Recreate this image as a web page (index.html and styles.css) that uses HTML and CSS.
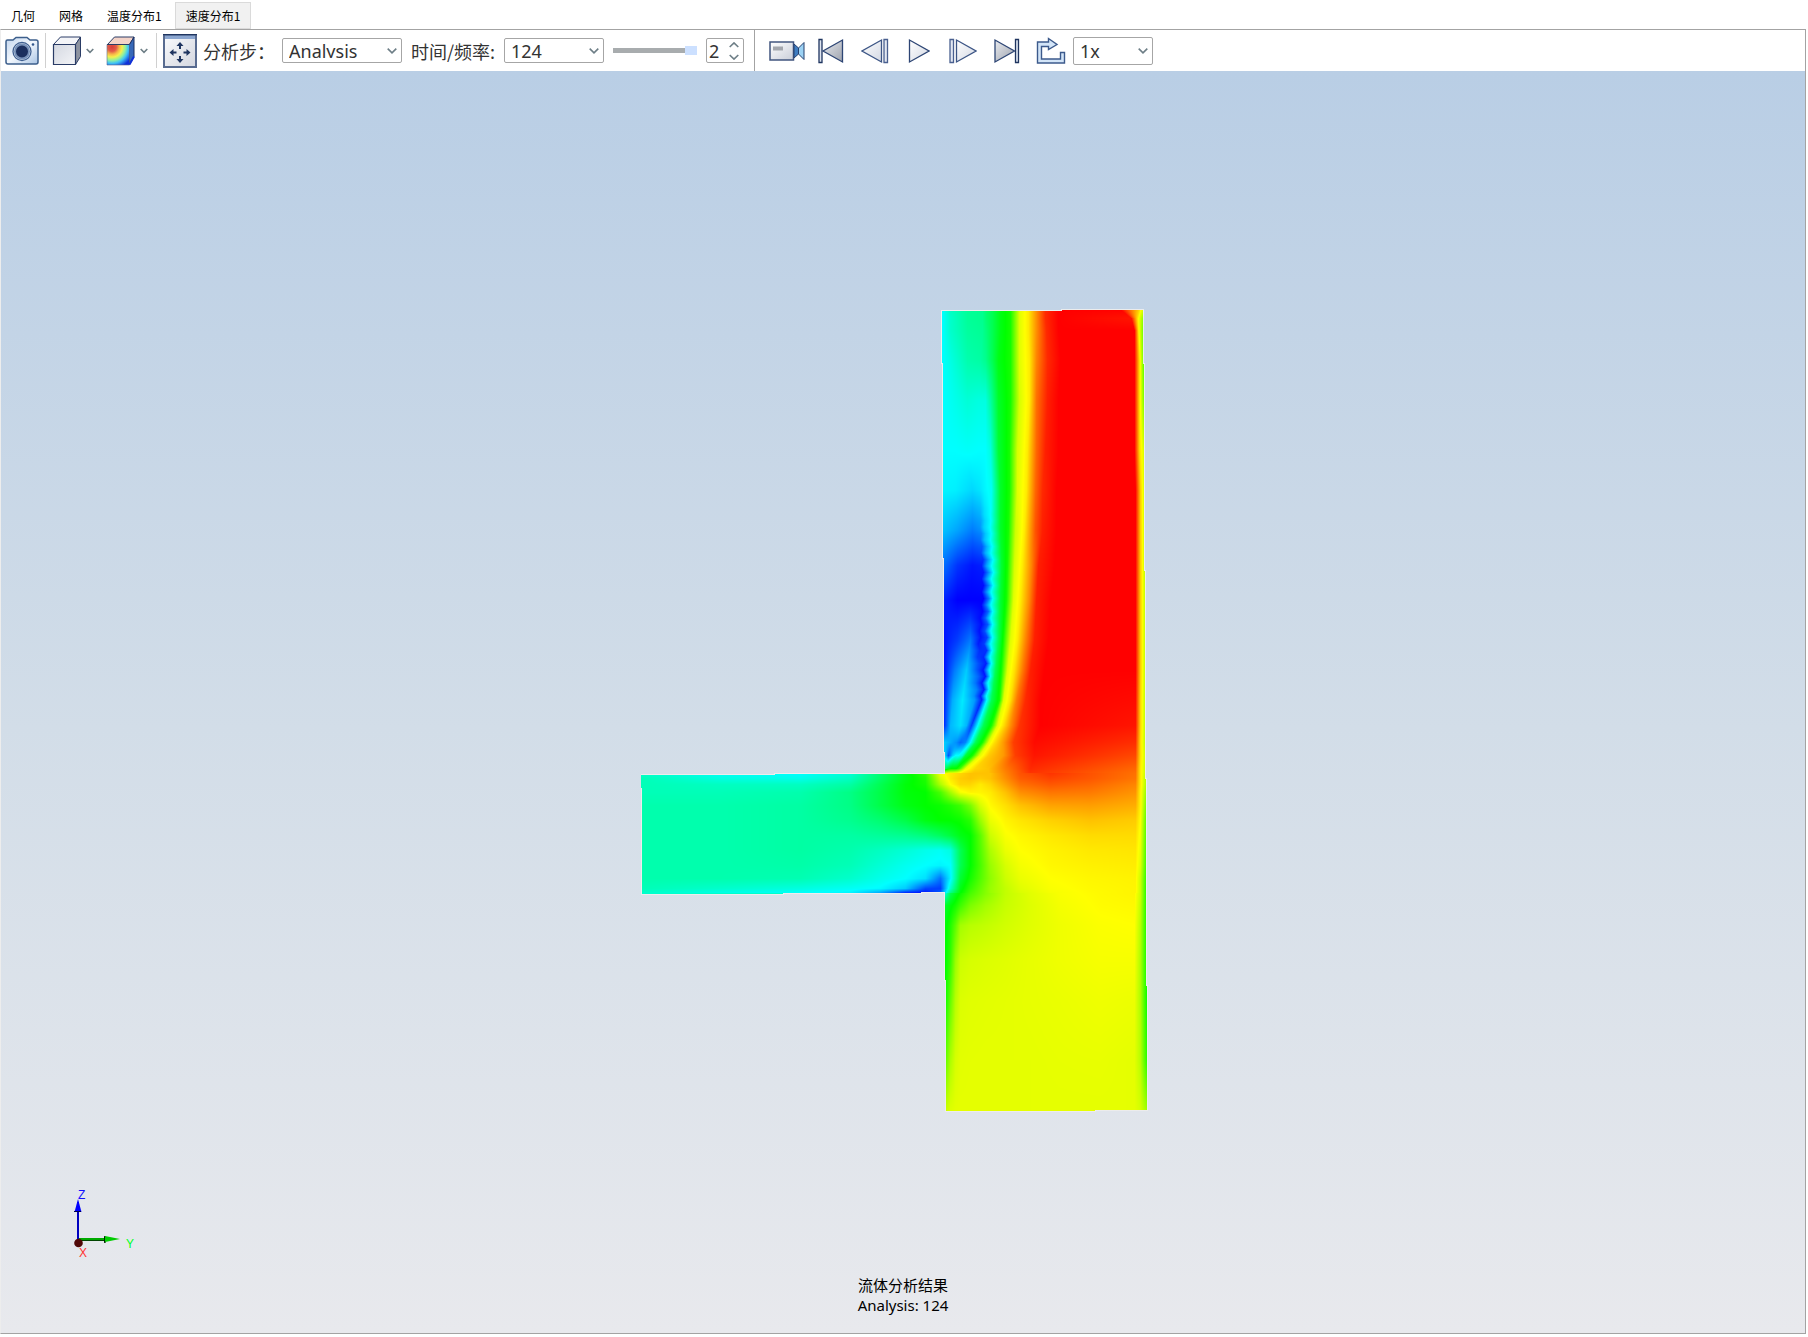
FILE: index.html
```html
<!DOCTYPE html>
<html lang="zh-CN">
<head>
<meta charset="utf-8">
<title>速度分布1</title>
<link rel="stylesheet" href="styles.css">
</head>
<body>
<nav class="tabs">
  <button class="tab" type="button">几何</button>
  <button class="tab" type="button">网格</button>
  <button class="tab" type="button">温度分布1</button>
  <button class="tab tab-active" type="button">速度分布1</button>
</nav>
<main class="panel">
  <div class="toolbar">
    <button class="tool tool-camera" type="button" aria-label="截图">
      <svg width="35" height="30" viewBox="0 0 35 30">
        <defs><linearGradient id="cam" x1="0" y1="0" x2="1" y2="1"><stop offset="0" stop-color="#c2d5ee"/><stop offset=".5" stop-color="#f2f7fd"/><stop offset="1" stop-color="#a9c4e4"/></linearGradient></defs>
        <path d="M2 5.500Q2 4 3.500 4H9L12 1.500H23L26 4H32Q34 4 34 6V26Q34 28 32 28H4Q2 28 2 26Z" fill="url(#cam)" stroke="#3d5f8c" stroke-width="1.500"/>
        <circle cx="18" cy="15.500" r="9" fill="#e8f0fa" stroke="#3f5f90" stroke-width="1.300"/>
        <circle cx="18" cy="15.500" r="7" fill="#1b2f5e" stroke="#7690b8" stroke-width="2"/>
        <circle cx="29" cy="8.500" r="1.300" fill="#31568c"/>
      </svg>
    </button>
    <span class="rule"></span>
    <button class="tool tool-menu" type="button" aria-label="显示模式">
      <svg width="30" height="30" viewBox="0 0 30 30">
        <defs><linearGradient id="gr" x1="0" y1="0" x2="1" y2="1"><stop offset="0" stop-color="#d4d8e1"/><stop offset="1" stop-color="#f3f4f7"/></linearGradient></defs>
        <path d="M1.500 8.500L8.500 1H28.500L23.500 8.500Z" fill="#f4f5f8" stroke="#2a3c66"/>
        <path d="M23.500 8.500L28.500 1V20.500L23.500 28.500Z" fill="#8d93a0" stroke="#2a3c66"/>
        <path d="M1.500 8.500H23.500V28.500H1.500Z" fill="url(#gr)" stroke="#2a3c66" stroke-width="1.200"/>
      </svg>
      <svg class="chevron" width="8" height="6" viewBox="0 0 8 6"><path d="M.7 1L4 4.300L7.300 1"/></svg>
    </button>
    <button class="tool tool-menu" type="button" aria-label="云图">
      <svg width="32" height="30" viewBox="0 0 32 30">
        <defs><radialGradient id="rb" gradientUnits="userSpaceOnUse" cx="8" cy="11" r="24"><stop offset="0" stop-color="#d83c3c"/><stop offset=".18" stop-color="#e25a48"/><stop offset=".3" stop-color="#f6b44a"/><stop offset=".42" stop-color="#f5f04c"/><stop offset=".56" stop-color="#8ff0a0"/><stop offset=".68" stop-color="#40c4f6"/><stop offset=".9" stop-color="#1030d8"/></radialGradient></defs>
        <path d="M3.500 8.500L10.500 1H30L25.500 8.500Z" fill="#f3d3c8" stroke="#2a3c66"/>
        <path d="M25.500 8.500L30 1V20.500L25.500 28.500Z" fill="#3768b8" stroke="#1d3163"/>
        <path d="M3 8.500H25.500V29H3Z" fill="url(#rb)" stroke="#5a6a90" stroke-width=".6"/><path d="M3 8.500H25.500" stroke="#2a3c66"/>
        <path d="M25.500 28.500L30 20.500" stroke="#1030d8" stroke-width="2"/>
      </svg>
      <svg class="chevron" width="8" height="6" viewBox="0 0 8 6"><path d="M.7 1L4 4.300L7.300 1"/></svg>
    </button>
    <span class="rule"></span>
    <button class="tool tool-fit" type="button" aria-label="适应窗口">
      <svg width="34" height="34" viewBox="0 0 34 34">
        <defs><linearGradient id="ft" x1="0" y1="0" x2="1" y2="1"><stop offset="0" stop-color="#fbfcfe"/><stop offset="1" stop-color="#d3d6df"/></linearGradient></defs>
        <path d="M1 1H33V33H1Z" fill="url(#ft)" stroke="#586b90" stroke-width="2"/>
        <path d="M2 1.500H32V5H2Z" fill="#8ba6d0"/><path d="M0 .5H34" stroke="#1f3560" stroke-width="1.500"/>
        <g fill="#1f3560"><path d="M17 8L20.500 12H18V15H16V12H13.500Z"/><path d="M17 29L20.500 25H18V22H16V25H13.500Z"/><path d="M6.500 18.500L10.500 15V17.500H13.500V19.500H10.500V22Z"/><path d="M27.500 18.500L23.500 15V17.500H20.500V19.500H23.500V22Z"/></g>
      </svg>
    </button>
    <label class="label label-step" for="step">分析步：</label>
    <span class="combo combo-step">
      <select id="step" class="select"><option>Analysis</option></select>
      <svg class="chevron" width="10" height="6" viewBox="0 0 10 6"><path d="M.7 .7L5 4.800L9.300 .7"/></svg>
    </span>
    <label class="label label-time" for="time">时间/频率:</label>
    <span class="combo combo-time">
      <select id="time" class="select"><option>124</option></select>
      <svg class="chevron" width="10" height="6" viewBox="0 0 10 6"><path d="M.7 .7L5 4.800L9.300 .7"/></svg>
    </span>
    <input class="slider" type="range" min="1" max="2" value="2" aria-label="帧">
    <span class="spin">
      <input class="spin-value" type="number" value="2" aria-label="帧号">
      <svg class="chevron" width="10" height="18" viewBox="0 0 10 18"><path d="M.7 5L5 .900L9.300 5M.7 13L5 17.100L9.300 13"/></svg>
    </span>
    <div class="player">
      <button class="tool tool-play" type="button" aria-label="录制">
        <svg width="36" height="22" viewBox="0 0 36 22">
          <defs><linearGradient id="vd" x1="0" y1="0" x2="1" y2="1"><stop offset="0" stop-color="#fff"/><stop offset="1" stop-color="#c9cdd8"/></linearGradient></defs>
          <path d="M1 2H24.500V20H1Z" fill="url(#vd)" stroke="#42557f" stroke-width="1.500"/>
          <path d="M4 6.500H14V10.500H4Z" fill="#a3a6ad"/>
          <path d="M25 4L29.500 8V14L25 18Z" fill="#3f7cc0" stroke="#27406f"/>
          <path d="M35 2.500V19.500L29.500 14V8Z" fill="#9cd2f4" stroke="#27406f"/>
        </svg>
      </button>
      <button class="tool tool-play" type="button" aria-label="第一帧">
        <svg width="26" height="26" viewBox="0 0 26 26"><defs><linearGradient id="dk" x1="0" y1="0" x2="1" y2="1"><stop offset="0" stop-color="#e9ebef"/><stop offset="1" stop-color="#9da2ad"/></linearGradient></defs>
          <path d="M1 1.500H4V24.500H1Z" fill="#dfe5f0" stroke="#1f3560" stroke-width="1.300"/><path d="M24.500 2V24L5 13Z" fill="url(#dk)" stroke="#2d4574" stroke-width="1.300"/></svg>
      </button>
      <button class="tool tool-play" type="button" aria-label="上一帧">
        <svg width="28" height="26" viewBox="0 0 28 26"><defs><linearGradient id="lt" x1="0" y1="0" x2="1" y2="1"><stop offset="0" stop-color="#fff"/><stop offset="1" stop-color="#d3d8e3"/></linearGradient></defs>
          <path d="M20.500 2V24L1 13Z" fill="url(#lt)" stroke="#3c5585" stroke-width="1.300"/><path d="M23 1.500H26.500V24.500H23Z" fill="#e3e8f2" stroke="#4a6090" stroke-width="1.300"/></svg>
      </button>
      <button class="tool tool-play" type="button" aria-label="播放">
        <svg width="22" height="26" viewBox="0 0 22 26"><path d="M1.500 2V24L21 13Z" fill="url(#lt)" stroke="#2d4574" stroke-width="1.300"/></svg>
      </button>
      <button class="tool tool-play" type="button" aria-label="下一帧">
        <svg width="28" height="26" viewBox="0 0 28 26"><path d="M1 1.500H4.500V24.500H1Z" fill="#e3e8f2" stroke="#4a6090" stroke-width="1.300"/><path d="M7.500 2V24L27 13Z" fill="url(#lt)" stroke="#3c5585" stroke-width="1.300"/></svg>
      </button>
      <button class="tool tool-play" type="button" aria-label="最后一帧">
        <svg width="26" height="26" viewBox="0 0 26 26"><path d="M1 2V24L20.500 13Z" fill="url(#dk)" stroke="#2d4574" stroke-width="1.300"/><path d="M21.500 1.500H24.500V24.500H21.500Z" fill="#dfe5f0" stroke="#1f3560" stroke-width="1.300"/></svg>
      </button>
      <button class="tool tool-play" type="button" aria-label="循环">
        <svg width="30" height="28" viewBox="0 0 30 28"><path d="M1.500 5H12.500V1.500L21 7.500L12.500 12.500V9.500H5.500V22H24.500V15.500H28.500V26H1.500Z" fill="#d3e5f8" stroke="#3c5a8c" stroke-width="1.400"/></svg>
      </button>
      <span class="combo combo-speed">
        <select class="select" aria-label="速度"><option>1x</option></select>
        <svg class="chevron" width="10" height="6" viewBox="0 0 10 6"><path d="M.7 .7L5 4.800L9.300 .7"/></svg>
      </span>
    </div>
  </div>
  <section class="viewport">
    <canvas id="field" class="field" width="524" height="804"></canvas>
    <svg class="triad" width="80" height="80" viewBox="0 0 80 80">
      <path d="M10 54.500H37" stroke="#004400" stroke-width="1"/><path d="M10 53H40" stroke="#0a0" stroke-width="2"/>
      <path d="M36 50V57L38 56.500V50.500Z" fill="#020"/><path d="M37 50L52 53L37 56Z" fill="#0c0"/>
      <path d="M10 16V54" stroke="#0000c0" stroke-width="2"/><path d="M10 13L13.500 26H6.500Z" fill="#00f"/><path d="M6 25.500H13" stroke="#000050"/>
      <circle cx="10.500" cy="57" r="4.300" fill="#500808"/>
      <text class="axis axis-z" x="10" y="13">Z</text>
      <text class="axis axis-y" x="58" y="62">Y</text>
      <text class="axis axis-x" x="11" y="71">X</text>
    </svg>
    <p class="caption">流体分析结果<br>Analysis: 124</p>
  </section>
</main>
<script src="script.js"></script>
</body>
</html>
```
FILE: styles.css
```css
* { box-sizing: border-box; }

body {
  margin: 0;
  height: 100vh;
  padding: 0 2px 3px 0;
  display: flex;
  flex-direction: column;
  background: #fff;
  color: #333;
  font-family: "Noto Sans", "Noto Sans CJK SC", sans-serif;
}

button, select, input { font: inherit; color: inherit; }

.tabs {
  display: flex;
  gap: 2px;
  height: 29px;
  padding-top: 2px;
}

.tab {
  height: 27px;
  padding: 0 10px;
  border: 1px solid transparent;
  background: none;
  color: #000;
  font-family: "Noto Sans CJK SC", sans-serif;
  font-size: 12px;
  line-height: 24px;
  white-space: nowrap;
}

.tab-active {
  border-color: #dadada;
  background: #f1f1f1;
}

.panel {
  flex: 1;
  display: flex;
  flex-direction: column;
  border: 1px solid #a3a3a3;
  border-left-color: #ededed;
}

.toolbar {
  display: flex;
  align-items: center;
  gap: 6px;
  height: 41px;
  padding-left: 3px;
  background: #fff;
}

.rule {
  width: 1px;
  height: 35px;
  background: #d0d0d0;
}

.tool {
  display: flex;
  align-items: center;
  flex-shrink: 0;
  padding: 0;
  border: 0;
  background: none;
}

.tool-camera { width: 35px; }
.tool-menu { width: 46px; gap: 4px; }
.tool-fit { width: 34px; }
.tool-play { width: 44px; justify-content: center; }

.chevron {
  fill: none;
  stroke: #6d7e86;
  stroke-width: 1.6;
}

.label {
  font-family: "Noto Sans CJK SC", sans-serif;
  font-size: 18px;
  line-height: 28px;
  white-space: nowrap;
}

.label-step { width: 73px; }
.label-time { width: 90px; text-align: center; }

.combo {
  display: grid;
  align-items: center;
  height: 25px;
  border: 1px solid #a6a6a6;
  border-radius: 2px;
  background: #fff;
}

.combo > * { grid-area: 1 / 1; }

.combo .chevron {
  justify-self: end;
  margin-right: 4px;
  pointer-events: none;
}

.combo-step { width: 120px; }
.combo-time { width: 100px; }
.combo-speed { width: 80px; height: 28px; }

.select {
  appearance: none;
  width: 100%;
  height: 23px;
  padding: 0 6px;
  border: 0;
  outline: 0;
  background: none;
  font-size: 18px;
}

.combo-step .select { clip-path: inset(0 0 4px); }

.slider {
  appearance: none;
  width: 90px;
  height: 9px;
  margin: 0;
  padding: 0 3px;
  background: none;
}

.slider::-webkit-slider-runnable-track {
  height: 9px;
  background: linear-gradient(#a8acae, #a8acae) center / 100% 5px no-repeat;
}

.slider::-webkit-slider-thumb {
  appearance: none;
  width: 12px;
  height: 9px;
  background: #cce0ff;
}

.spin {
  display: flex;
  align-items: center;
  width: 38px;
  height: 25px;
  padding: 0 4px 0 2px;
  border: 1px solid #a6a6a6;
  border-radius: 2px;
}

.spin-value {
  appearance: textfield;
  flex: 1;
  min-width: 0;
  height: 23px;
  padding: 0;
  border: 0;
  background: none;
  font-size: 18px;
}

.spin-value::-webkit-inner-spin-button { display: none; }

.player {
  display: flex;
  align-items: center;
  align-self: stretch;
  margin-left: 4px;
  padding-left: 10px;
  border-left: 1px solid #a3a3a3;
}

.viewport {
  position: relative;
  flex: 1;
  display: flex;
  align-items: center;
  justify-content: center;
  padding-top: 18px;
  background: linear-gradient(#b9cee5, #d2dde8 52%, #e8e9ed);
}

.field { display: block; }

.triad {
  position: absolute;
  left: 67px;
  bottom: 67px;
}

.axis { font-family: "Liberation Sans", sans-serif; font-size: 12px; }
.axis-x { fill: #f33; }
.axis-y { fill: #0f2; }
.axis-z { fill: #11f; }

.caption {
  position: absolute;
  left: 0;
  right: 0;
  bottom: 18px;
  margin: 0;
  color: #000;
  font-size: 15px;
  line-height: 20px;
  text-align: center;
}
```
FILE: script.js
```js
// Velocity magnitude over the tee junction. Values run 0 (blue) to 1 (red).
const ORIGIN_X = 641;
const ORIGIN_Y = 309;

// Each row: y, then knot positions and values. Knots of neighbouring rows correspond.
function row(y, xs, vs) { return { y, xs, vs }; }

const upper = [
  row(309, [942,950,967,982,986,992,1000,1010,1019,1028,1036,1045,1058,1120,1138,1144], [.25,.31,.35,.36,.39,.42,.48,.52,.72,.77,.86,.96,1,1,.8,.68]),
  row(318, [942,950,967,982,986,992,1000,1010,1019,1028,1036,1045,1058,1131,1137,1144], [.25,.3,.35,.36,.39,.42,.48,.52,.72,.77,.86,.96,1,.98,.78,.6]),
  row(330, [942,950,967,982,986,992,1000,1010,1019,1028,1036,1046,1058,1134,1138,1144], [.25,.3,.345,.355,.38,.42,.48,.52,.72,.77,.86,.96,1,1,.77,.56]),
  row(360, [942,951,967,980,985,992,998,1010,1019,1029,1036,1047,1060,1134,1139,1144], [.25,.28,.33,.34,.36,.42,.48,.52,.72,.77,.87,.96,1,1,.78,.56]),
  row(400, [943,955,967,978,985,990,998,1010,1019,1029,1036,1047,1058,1134,1139,1144], [.25,.27,.29,.28,.28,.34,.46,.52,.71,.77,.89,.97,1,1,.78,.6]),
  row(450, [943,955,967,978,985,990,998,1009,1017,1027,1036,1045,1058,1134,1139,1144], [.25,.25,.255,.25,.25,.28,.45,.52,.71,.77,.9,.97,1,1,.79,.7]),
  row(490, [943,955,972,980,984,991,1000,1009,1017,1026,1035,1042,1056,1135,1140,1144], [.24,.235,.21,.225,.24,.26,.46,.52,.72,.77,.9,.96,1,1,.8,.7]),
  row(530, [943,957,972,980,984,990,1000,1008,1015,1024,1035,1042,1056,1135,1140,1144], [.19,.16,.12,.14,.2,.25,.46,.52,.7,.77,.92,.97,1,1,.8,.7]),
  row(565, [943,957,972,982,987,992,1001,1007,1014,1022,1031,1038,1054,1135,1140,1144], [.11,.05,.02,.03,.15,.25,.45,.52,.71,.77,.87,.97,1,1,.8,.7]),
  row(600, [944,957,970,982,987,991,1000,1006,1013,1020,1029,1036,1050,1135,1140,1145], [.03,0,0,0,.12,.24,.45,.52,.72,.77,.87,.97,1,1,.8,.68]),
  row(640, [944,957,970,979,985,990,998,1003,1010,1017,1025,1034,1048,1135,1140,1145], [.02,.06,.12,.02,.06,.22,.42,.52,.72,.77,.87,.97,1,1,.8,.68]),
  row(670, [944,954,966,977,984,989,995,1001,1007,1014,1022,1030,1044,1135,1140,1145], [.02,.12,.2,.09,.02,.22,.42,.52,.72,.78,.88,.97,1,1,.8,.68]),
  row(700, [944,952,962,974,981,986,991,999,1003,1010,1016,1025,1040,1135,1140,1145], [.04,.17,.23,.15,.03,.24,.42,.52,.72,.78,.88,.96,1,.99,.79,.68]),
  row(725, [944,950,960,966,971,977,983,991,997,1003,1010,1019,1040,1135,1140,1145], [.05,.18,.22,.18,.06,.24,.42,.52,.72,.78,.86,.95,1,.98,.79,.68]),
  row(742, [944,950,956,960,965,970,975,982,988,994,1003,1013,1034,1135,1140,1145], [.2,.17,.14,.1,.13,.25,.42,.52,.72,.78,.85,.94,.99,.955,.78,.68]),
  row(755, [945,948,952,955,958,962,965,972,979,988,1003,1015,1034,1135,1140,1146], [.2,.08,.2,.25,.25,.3,.44,.52,.72,.8,.85,.94,.98,.93,.78,.68]),
  row(768, [945,947,949,951,952,954,956,959,965,975,988,1005,1030,1135,1140,1146], [.4,.45,.48,.5,.5,.5,.5,.55,.73,.79,.81,.88,.96,.9,.77,.68]),
  row(773, [941,943,945,947,949,951,953,956,962,973,988,1005,1030,1135,1140,1146], [.7,.72,.73,.74,.75,.75,.76,.76,.78,.81,.81,.87,.95,.89,.77,.68])
];

const MX = [642,720,800,850,880,905,925,940,950,960,970,980,990,1005,1020,1050,1090,1135,1140,1147];
const middle = [
  [773, .3,.26,.25,.29,.39,.48,.55,.74,.77,.79,.81,.81,.81,.87,.92,.95,.92,.89,.77,.66],
  [778, .32,.28,.27,.31,.4,.48,.53,.71,.77,.8,.81,.8,.81,.86,.91,.935,.915,.885,.77,.65],
  [784, .32,.31,.31,.34,.42,.49,.52,.67,.75,.79,.79,.77,.79,.84,.89,.915,.9,.87,.77,.64],
  [792, .32,.32,.33,.37,.43,.49,.5,.57,.66,.74,.76,.76,.77,.81,.86,.885,.88,.855,.76,.62],
  [805, .33,.33,.34,.37,.43,.48,.5,.51,.53,.56,.62,.71,.755,.78,.81,.84,.845,.83,.76,.58],
  [820, .33,.33,.34,.36,.39,.43,.48,.5,.5,.51,.54,.65,.73,.76,.775,.795,.81,.8,.75,.55],
  [835, .33,.33,.34,.34,.35,.36,.38,.41,.44,.48,.5,.59,.7,.745,.758,.772,.785,.785,.74,.54],
  [850, .33,.33,.34,.33,.31,.29,.27,.26,.28,.42,.5,.58,.67,.73,.75,.762,.772,.775,.73,.53],
  [865, .33,.33,.335,.32,.29,.265,.25,.24,.25,.42,.5,.57,.65,.71,.74,.757,.764,.768,.72,.52],
  [878, .33,.33,.325,.3,.27,.25,.22,.11,.24,.45,.52,.58,.64,.7,.73,.75,.758,.762,.7,.51],
  [888, .32,.3,.28,.26,.245,.2,.07,.06,.3,.48,.55,.6,.65,.69,.72,.745,.755,.76,.7,.5],
  [893, .3,.27,.25,.235,.15,.01,.01,.1,.38,.5,.57,.61,.65,.69,.712,.74,.753,.76,.7,.5]
].map(([y, ...vs]) => row(y, MX, vs));

const LX = [945,950,955,960,970,985,1005,1030,1060,1100,1134,1140,1147];
const lower = [
  [893, .3,.42,.47,.51,.57,.63,.69,.722,.745,.755,.76,.7,.5],
  [905, .46,.49,.52,.56,.62,.66,.695,.718,.74,.753,.756,.69,.5],
  [925, .49,.53,.59,.66,.68,.69,.705,.72,.735,.747,.75,.68,.5],
  [960, .5,.55,.65,.7,.71,.715,.72,.727,.735,.742,.742,.67,.5],
  [1000, .51,.6,.68,.715,.72,.722,.724,.727,.73,.735,.732,.67,.5],
  [1060, .59,.67,.71,.722,.724,.725,.725,.725,.727,.728,.724,.68,.53],
  [1113, .7,.72,.724,.725,.725,.725,.725,.725,.725,.725,.725,.71,.66]
].map(([y, ...vs]) => row(y, LX, vs));

// Outline of the part, stepping with the slightly rotated mesh edges.
const outline = [
  [942,311],[1062,311],[1062,310],[1143,310],[1143,364],[1144,364],[1144,571],[1145,571],[1145,779],
  [1146,779],[1146,986],[1147,986],[1147,1110],[1095,1110],[1095,1111],[946,1111],[946,980],[945,980],[945,892],
  [921,892],[921,893],[783,893],[783,894],[642,894],[642,788],[641,788],[641,775],[775,775],[775,774],
  [945,774],[945,752],[944,752],[944,558],[943,558],[943,363],[942,363]
];

function colour(v) {
  const t = Math.max(0, Math.min(1, v)) * 4;
  if (t < 1) return [0, 255 * t, 255];
  if (t < 2) return [0, 255, 255 * (2 - t)];
  if (t < 3) return [255 * (t - 2), 255, 0];
  return [255, 255 * (4 - t), 0];
}

function sampleRow(rows, y) {
  let i = 0;
  while (i < rows.length - 2 && rows[i + 1].y <= y) i++;
  const a = rows[i], b = rows[i + 1];
  const t = Math.max(0, Math.min(1, (y - a.y) / (b.y - a.y)));
  const mix = (p, q) => p.map((n, k) => n + (q[k] - n) * t);
  return { xs: mix(a.xs, b.xs), vs: mix(a.vs, b.vs) };
}

const canvas = document.getElementById("field");
const ctx = canvas.getContext("2d");
const layer = document.createElement("canvas");
layer.width = canvas.width;
layer.height = canvas.height;
const layerCtx = layer.getContext("2d");
const image = layerCtx.createImageData(layer.width, layer.height);

for (let py = 0; py < layer.height; py++) {
  const y = py + ORIGIN_Y;
  const rows = y < 773 ? upper : y < 893 ? middle : lower;
  const { xs, vs } = sampleRow(rows, y);
  // Coarse cells leave a serrated edge along the recirculation zone.
  if (y > 500 && y < 700) {
    const tooth = 2 * Math.abs(((y / 13) % 1) * 2 - 1) - 1;
    const size = Math.min(1, (y - 500) / 60);
    xs[3] += tooth * size;
    xs[4] += tooth * size * 1.5;
    xs[5] += tooth * size;
  }
  let k = 0;
  for (let px = 0; px < layer.width; px++) {
    const x = px + ORIGIN_X;
    while (k < xs.length - 2 && xs[k + 1] <= x) k++;
    const t = Math.max(0, Math.min(1, (x - xs[k]) / (xs[k + 1] - xs[k])));
    const [r, g, b] = colour(vs[k] + (vs[k + 1] - vs[k]) * t);
    const o = (py * layer.width + px) * 4;
    image.data[o] = r;
    image.data[o + 1] = g;
    image.data[o + 2] = b;
    image.data[o + 3] = 255;
  }
}
layerCtx.putImageData(image, 0, 0);

ctx.beginPath();
outline.forEach(([x, y]) => ctx.lineTo(x - ORIGIN_X, y - ORIGIN_Y));
ctx.closePath();
ctx.strokeStyle = "#ececec";
ctx.lineWidth = 2;
ctx.stroke();
ctx.clip();
ctx.drawImage(layer, 0, 0);
```
